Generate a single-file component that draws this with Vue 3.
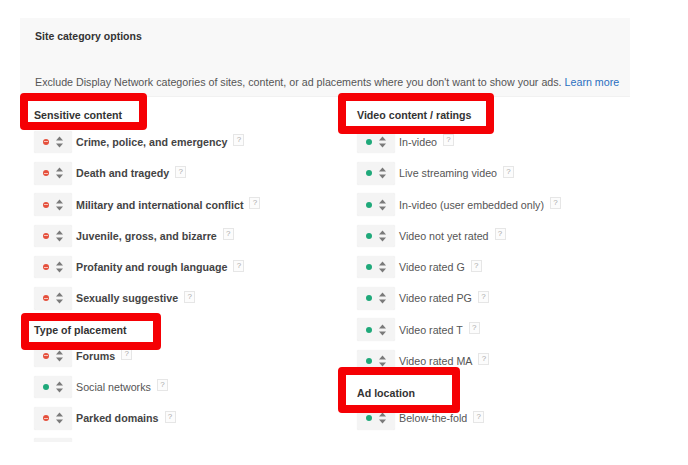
<template>
  <div class="page">
    <div class="panel">
      <h2 class="panel-title">Site category options</h2>
      <p class="panel-desc">
        Exclude Display Network categories of sites, content, or ad placements where you don't want to show your ads.
        <a class="learn">Learn more</a>
      </p>
    </div>

    <div class="columns">
      <div class="column" v-for="(column, i) in columns" :key="i">
        <section class="group" v-for="group in column" :key="group.title">
          <h3 class="group-title">{{ group.title }}</h3>
          <div class="row" v-for="item in group.items" :key="item.label">
            <div class="toggle">
              <span class="dot" :class="item.off ? 'dot-off' : 'dot-on'"></span>
              <svg class="arrows" width="7" height="12" viewBox="0 0 7 12">
                <path d="M3.5 0.5 L7 4.5 L0 4.5 Z M3.5 11.5 L7 7.5 L0 7.5 Z" fill="#7a7a7a" />
              </svg>
            </div>
            <span class="label" :class="{ bold: item.off }">{{ item.label }}</span>
            <span class="help">?</span>
          </div>
          <div class="toggle stub" v-if="group.stub"></div>
        </section>
      </div>
    </div>

    <div class="mark mark-sensitive"></div>
    <div class="mark mark-video"></div>
    <div class="mark mark-placement"></div>
    <div class="mark mark-location"></div>
  </div>
</template>

<script setup>
const on = (label) => ({ label, off: false });
const off = (label) => ({ label, off: true });

const columns = [
  [
    {
      title: 'Sensitive content',
      items: [
        off('Crime, police, and emergency'),
        off('Death and tragedy'),
        off('Military and international conflict'),
        off('Juvenile, gross, and bizarre'),
        off('Profanity and rough language'),
        off('Sexually suggestive'),
      ],
    },
    {
      title: 'Type of placement',
      stub: true,
      items: [off('Forums'), on('Social networks'), off('Parked domains')],
    },
  ],
  [
    {
      title: 'Video content / ratings',
      items: [
        on('In-video'),
        on('Live streaming video'),
        on('In-video (user embedded only)'),
        on('Video not yet rated'),
        on('Video rated G'),
        on('Video rated PG'),
        on('Video rated T'),
        on('Video rated MA'),
      ],
    },
    {
      title: 'Ad location',
      items: [on('Below-the-fold')],
    },
  ],
];
</script>

<style>
html,
body {
  background: #fff;
}
</style>

<style scoped>
.page {
  position: relative;
  width: 688px;
  height: 465px;
  overflow: hidden;
  padding-top: 18px;
  box-sizing: border-box;
  font-family: "Liberation Sans", Arial, sans-serif;
  font-size: 10.7px;
  color: #444;
}

.panel {
  margin-left: 20px;
  width: 610px;
  height: 79px;
  padding: 12px 0 0 15px;
  box-sizing: border-box;
  background: #f8f8f8;
  border-bottom: 1px solid #f1f1f1;
}

.panel-title {
  margin: 0;
  font-size: 10.5px;
  line-height: 13px;
  font-weight: bold;
  color: #333;
}

.panel-desc {
  margin: 32px 0 0;
  line-height: 14px;
  color: #555;
  white-space: nowrap;
}

.learn {
  color: #2a6fc0;
}

.columns {
  display: flex;
  padding-left: 34px;
  height: 345px;
  overflow: hidden;
}

.column {
  width: 323px;
}

.group {
  padding-top: 10.7px;
}

.group + .group {
  padding-top: 5px;
}

.group-title {
  margin: 0 0 9px;
  font-size: 10.65px;
  line-height: 14px;
  font-weight: bold;
  color: #333;
}

.group + .group .group-title {
  margin-bottom: 7px;
}

.row {
  display: flex;
  align-items: center;
  height: 22.6px;
  margin-bottom: 8.7px;
}

.toggle {
  display: flex;
  align-items: center;
  flex: none;
  width: 38px;
  height: 22.6px;
  padding-left: 9px;
  gap: 6.5px;
  box-sizing: border-box;
  background: #f4f4f4;
  border-radius: 2px;
  box-shadow: 0 0 1px #e4e4e4;
}

.stub {
  height: 8px;
}

.dot {
  position: relative;
  width: 6px;
  height: 6px;
  border-radius: 50%;
}

.dot-on {
  background: #1fa97a;
}

.dot-off {
  background: #e5503c;
}

.dot-off::after {
  content: "";
  position: absolute;
  left: 1px;
  right: 1px;
  top: 2.5px;
  height: 1px;
  background: #f7c4bb;
}

.arrows {
  display: block;
}

.label {
  margin-left: 4px;
  line-height: 14px;
  color: #555;
  white-space: nowrap;
}

.label.bold {
  font-weight: bold;
  color: #444;
}

.help {
  width: 9px;
  height: 10px;
  margin-left: 6px;
  margin-top: -3px;
  border: 1px solid #e6e6e6;
  font-size: 8px;
  line-height: 10px;
  text-align: center;
  color: #aaa;
  background: #fcfcfc;
}

.mark {
  position: absolute;
  box-sizing: border-box;
  border: 8px solid #f50004;
  border-radius: 4px;
}

.mark-sensitive {
  left: 20px;
  top: 93px;
  width: 127px;
  height: 37px;
}

.mark-video {
  left: 338px;
  top: 93px;
  width: 156px;
  height: 41px;
}

.mark-placement {
  left: 21px;
  top: 313px;
  width: 140px;
  height: 37px;
}

.mark-location {
  left: 338px;
  top: 367px;
  width: 122px;
  height: 46px;
}
</style>
